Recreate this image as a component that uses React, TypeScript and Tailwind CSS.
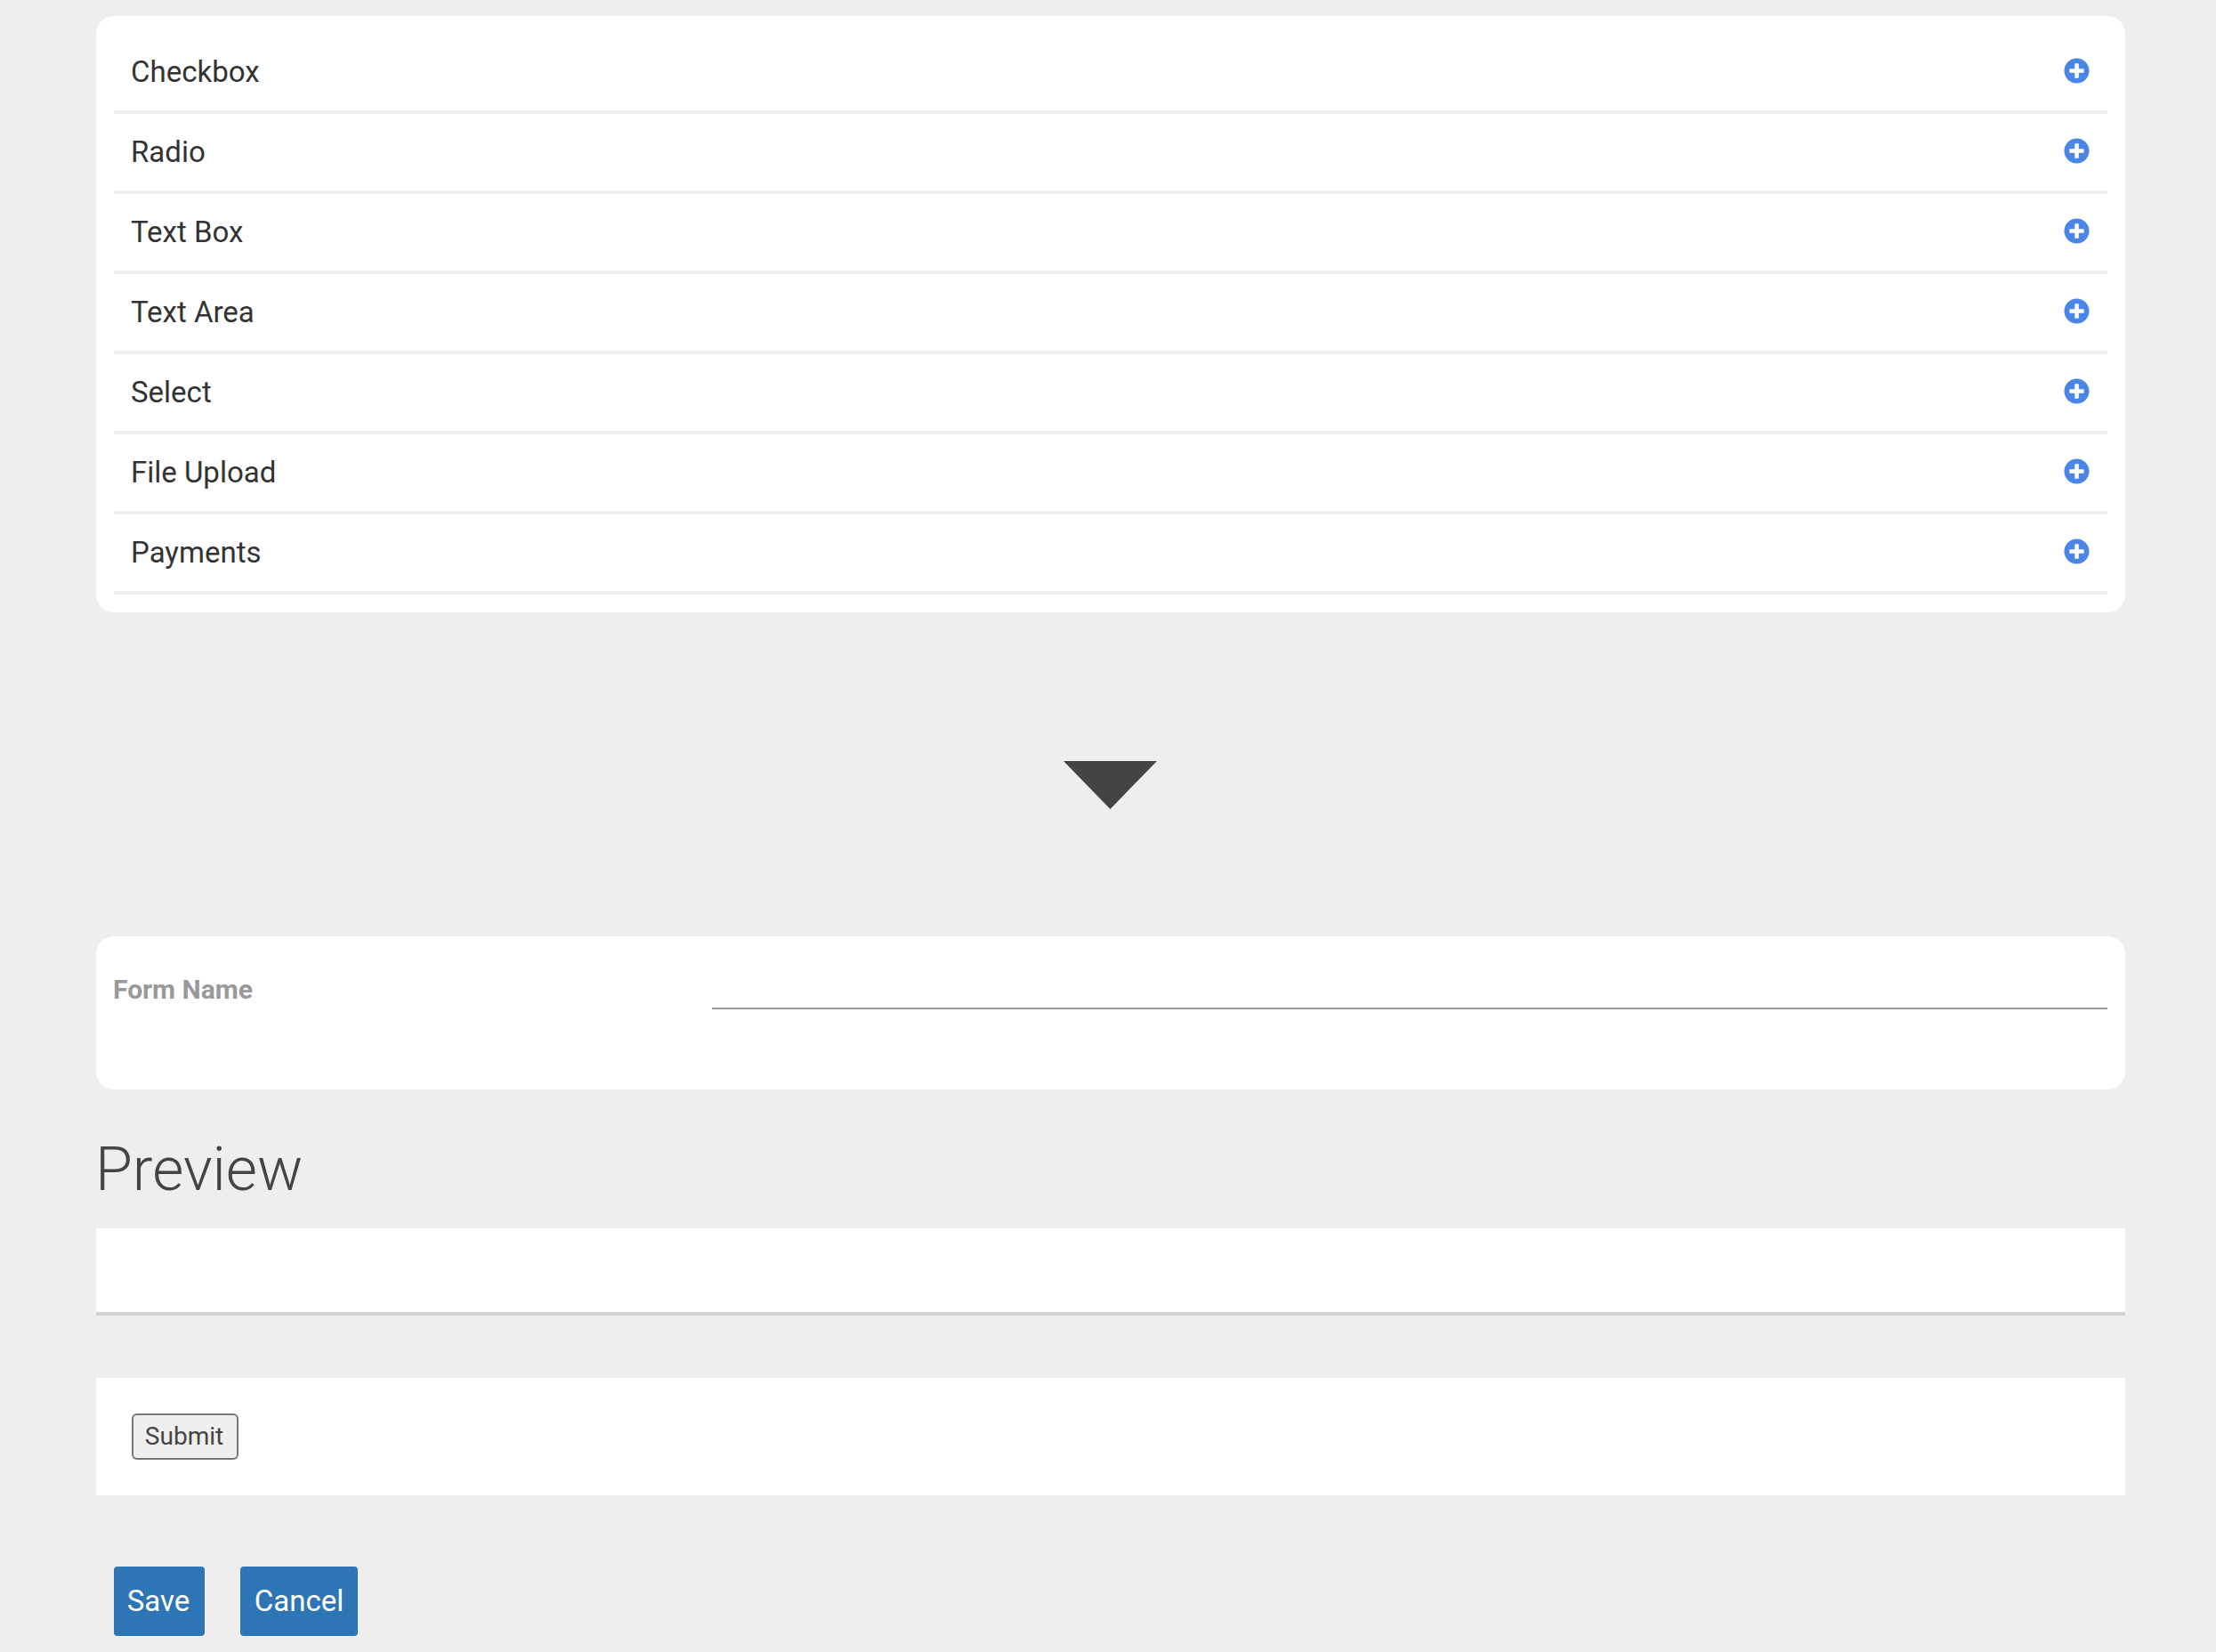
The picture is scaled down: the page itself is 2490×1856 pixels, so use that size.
import { FaPlusCircle } from "react-icons/fa";

const fields = ["Checkbox", "Radio", "Text Box", "Text Area", "Select", "File Upload", "Payments"];

export default function App() {
  return (
    <div className="min-h-screen bg-[#eeeeee] pl-[108px] pr-[102px] pt-[18px] font-['Roboto',sans-serif] text-[#333333]">
      <div className="rounded-[20px] bg-white p-5">
        {fields.map((field) => (
          <div
            className="flex h-[90px] items-center justify-between border-b-4 border-[#eeeeee] pl-[19px] pr-[20px] text-[33px]"
            key={field}
          >
            <span>{field}</span>
            <FaPlusCircle className="mb-[3px] size-[29px] text-[#4a86e8]" aria-hidden="true" />
          </div>
        ))}
      </div>

      <div className="mt-[167px] flex justify-center pr-px">
        <svg width="105" height="54" viewBox="0 0 105 54" aria-hidden="true">
          <path d="M0 0H105L52.5 54Z" fill="#444444" />
        </svg>
      </div>

      <div className="mt-[143px] flex h-[172px] rounded-[20px] bg-white pl-[19px] pr-5 pt-[38px]">
        <label className="w-[673px] text-[30px] leading-[44px] font-bold text-[#999999]">Form Name</label>
        <input className="h-[44px] flex-1 border-b-2 border-[#999999] outline-none" type="text" />
      </div>

      <h2 className="mt-[35px] mb-[10px] -ml-px text-[68px] leading-[111px] font-light text-[#444444]">Preview</h2>

      <div className="h-[98px] border-b-4 border-[#d3d3d3] bg-white" />

      <div className="mt-[70px] flex h-[132px] items-center bg-white pl-10">
        <button className="h-[52px] w-[120px] rounded-[6px] border-2 border-[#767676] bg-[#efefef] pr-0.5 text-[28px] text-[#444444]" type="button">
          Submit
        </button>
      </div>

      <div className="mt-20 flex gap-10 pl-5">
        <button className="h-[78px] w-[102px] rounded-[4px] bg-[#2e75b6] pr-0.5 text-[33px] text-white" type="button">
          Save
        </button>
        <button className="h-[78px] w-[132px] rounded-[4px] bg-[#2e75b6] text-[33px] text-white" type="button">
          Cancel
        </button>
      </div>
    </div>
  );
}
